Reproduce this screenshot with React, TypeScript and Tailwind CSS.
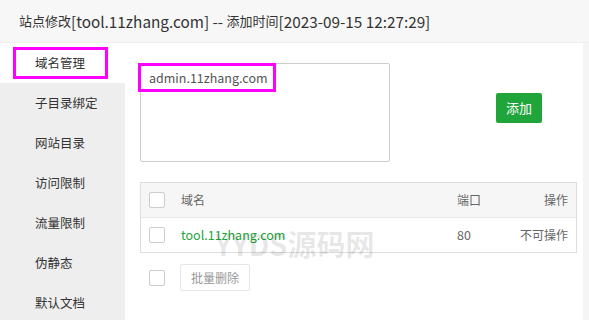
const menu = ['域名管理', '子目录绑定', '网站目录', '访问限制', '流量限制', '伪静态', '默认文档'];

function Checkbox() {
  return <span className="block w-4 h-4 border border-[#cccccc] rounded-[2px] bg-white"></span>;
}

export default function App() {
  return (
    <div
      className="w-[589px] h-[320px] overflow-hidden bg-white text-[#333333] flex flex-col"
      style={{ fontFamily: '"Noto Sans CJK SC", "Open Sans", sans-serif' }}
    >
      <div className="h-[43px] shrink-0 bg-[#f7f7f7] border-b border-[#eeeeee] flex items-center pl-[19px] text-[15.3px] whitespace-pre">
        <span className="text-[13px]">站点修改</span>
        <span>[tool.11zhang.com] -- </span>
        <span className="text-[13px]">添加时间</span>
        <span>[2023-09-15 12:27:29]</span>
      </div>

      <div className="flex flex-1 min-h-0">
        <ul className="w-[125px] shrink-0 bg-[#eeeeee] text-[12.5px]">
          {menu.map((item, i) => (
            <li
              key={i}
              className={`relative h-10 flex items-center pl-[35px] ${i === 0 ? 'bg-white' : ''}`}
            >
              {item}
              {i === 0 && (
                <span className="absolute left-[13px] top-[4px] w-[95px] h-[32px] border-[3px] border-[#ff00ff]"></span>
              )}
            </li>
          ))}
        </ul>

        <div className="flex-1 pl-[15px] pt-[20px]">
          <div className="flex items-start">
            <div className="relative w-[250px] h-[99px] border border-[#cccccc] rounded-[2px] text-[12.5px] text-[#555555] pl-[8px] pt-[5px]">
              admin.11zhang.com
              <span className="absolute left-[-3px] top-[-1px] w-[138px] h-[29px] border-[3px] border-[#ff00ff]"></span>
            </div>
            <button className="ml-[106px] mt-[30px] w-[46px] h-[30px] bg-[#20a53a] text-white text-[13px] rounded-[2px]">
              添加
            </button>
          </div>

          <div className="relative mt-[20px] w-[437px] border border-[#dddddd] text-[12px]">
            <div className="h-[35px] bg-[#f6f6f6] border-b border-[#e8e8e8] flex items-center text-[#666666]">
              <div className="w-[40px] pl-[8px]"><Checkbox /></div>
              <div className="flex-1">域名</div>
              <div className="w-[59px]">端口</div>
              <div className="w-[60px] text-right pr-[8px]">操作</div>
            </div>
            <div className="h-[34px] flex items-center text-[#666666]">
              <div className="w-[40px] pl-[8px]"><Checkbox /></div>
              <div className="flex-1 text-[#20a53a] text-[12.5px]">tool.11zhang.com</div>
              <div className="w-[59px] text-[12.5px]">80</div>
              <div className="w-[60px] text-right pr-[8px]">不可操作</div>
            </div>
            <span className="absolute left-[74px] top-[46px] text-[29px] leading-none font-bold text-black/10 pointer-events-none whitespace-nowrap">
              YYDS源码网
            </span>
          </div>

          <div className="mt-[11px] flex items-center">
            <div className="w-[40px] pl-[9px]"><Checkbox /></div>
            <button className="w-[70px] h-[27px] border border-[#e6e6e6] rounded-[2px] text-[12px] text-[#999999] bg-white">
              批量删除
            </button>
          </div>
        </div>

        <div className="w-[6px] shrink-0 bg-[#f5f5f5]"></div>
      </div>
    </div>
  );
}
